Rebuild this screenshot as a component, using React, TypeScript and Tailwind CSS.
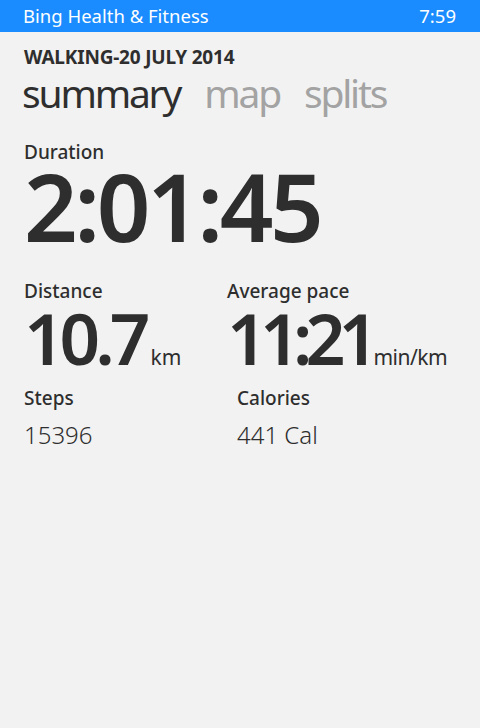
import React from 'react';

const font = { fontFamily: '"Noto Sans", "Open Sans", sans-serif' };

const App: React.FC = () => {
  return (
    <div className="w-[480px] h-[728px] bg-[#f2f2f2] text-[#2e2e2e] overflow-hidden" style={font}>
      {/* Status bar */}
      <div className="h-[32px] bg-[#1a8cff] text-white flex items-center justify-between pl-[23px] pr-[24px] text-[18.5px] leading-none">
        <span>Bing Health &amp; Fitness</span>
        <span>7:59</span>
      </div>

      {/* Header */}
      <div className="pl-[24px] pt-[13px]">
        <div className="text-[19px] font-bold leading-[24px] tracking-[-0.2px]">WALKING-20 JULY 2014</div>
        <div className="flex gap-[24px] text-[39px] leading-[44px] -ml-[2px] mt-[2px] tracking-[-2.2px]">
          <span>summary</span>
          <span className="text-[#a3a3a3]">map</span>
          <span className="text-[#a3a3a3]">splits</span>
        </div>
      </div>

      {/* Duration */}
      <div className="pl-[24px] mt-[25px]">
        <div className="text-[19px] font-medium leading-[24px]">Duration</div>
        <div className="text-[94px] font-semibold leading-[84px] tracking-[-3.5px]">2:01:45</div>
      </div>

      {/* Distance / pace */}
      <div className="grid grid-cols-[203px_1fr] pl-[24px] mt-[31px]">
        <div>
          <div className="text-[19px] font-medium leading-[24px]">Distance</div>
          <div className="flex items-baseline">
            <span className="text-[71px] font-semibold leading-[70px] tracking-[-5px]">10.7</span>
            <span className="text-[21px] ml-[5px]">km</span>
          </div>
        </div>
        <div>
          <div className="text-[19px] font-medium leading-[24px]">Average pace</div>
          <div className="flex items-baseline">
            <span className="text-[70px] font-semibold leading-[70px] tracking-[-7px]">11:21</span>
            <span className="text-[21px] ml-[2px] tracking-[-0.5px]">min/km</span>
          </div>
        </div>
      </div>

      {/* Steps / calories */}
      <div className="grid grid-cols-[213px_1fr] pl-[24px] mt-[12px]">
        <div>
          <div className="text-[19px] font-medium leading-[24px]">Steps</div>
          <div className="text-[24px] font-light leading-[32px] mt-[9px]">15396</div>
        </div>
        <div>
          <div className="text-[19px] font-medium leading-[24px]">Calories</div>
          <div className="text-[24px] font-light leading-[32px] mt-[9px]">441 Cal</div>
        </div>
      </div>
    </div>
  );
};

export default App;
